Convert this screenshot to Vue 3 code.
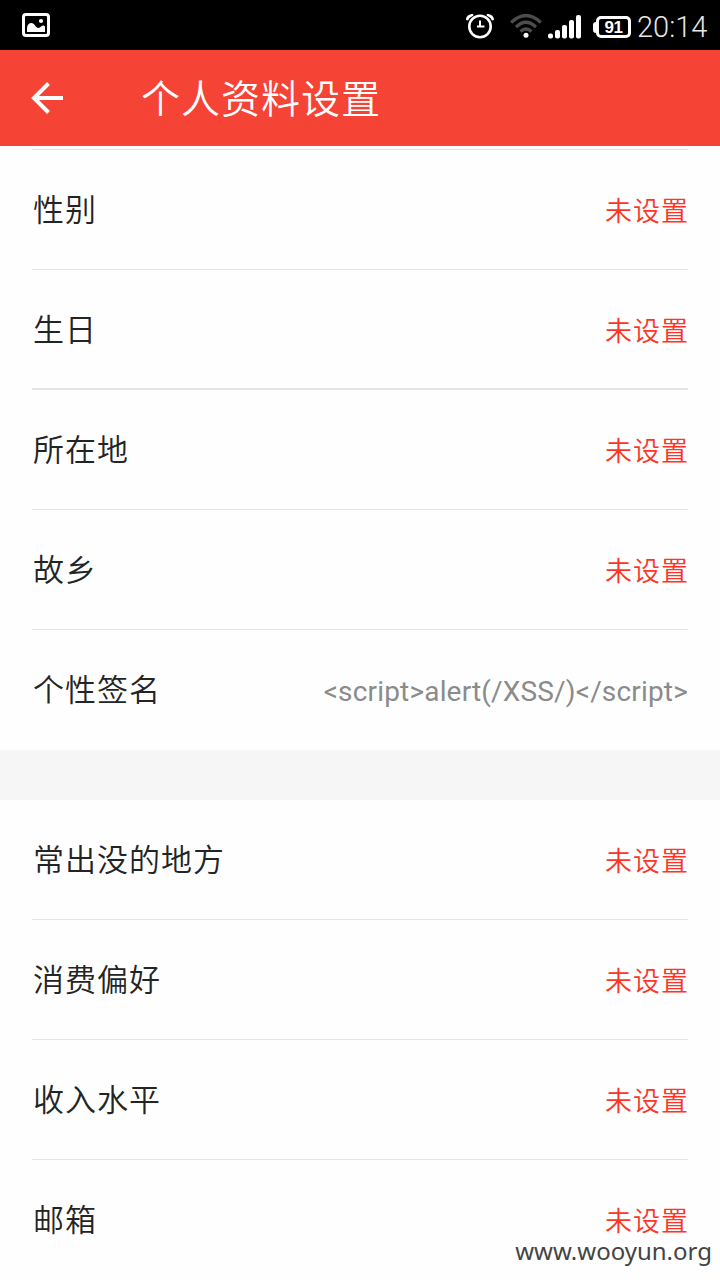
<script setup>
import { ref } from "vue";

const groups = ref([
  [
    { label: "性别" },
    { label: "生日", thick: true },
    { label: "所在地" },
    { label: "故乡" },
    { label: "个性签名", value: "<script>alert(/XSS/)<\/script>" },
  ],
  [
    { label: "常出没的地方" },
    { label: "消费偏好" },
    { label: "收入水平" },
    { label: "邮箱" },
  ],
]);
</script>

<template>
  <div class="screen">
    <div class="status-bar">
      <svg class="status-bar__picture" width="28" height="24" viewBox="0 0 28 24">
        <rect x="1.5" y="1.5" width="25" height="21" rx="2.5" fill="none" stroke="#fff" stroke-width="3" />
        <circle cx="19" cy="8" r="2.1" fill="#fff" />
        <path d="M5 19v-4c0-3 2-5 4.300-5 3.400 0 4.200 5 7.200 5 2 0 2.500-2.500 4.500-2.500 1 0 2 .5 2 1.500v5z" fill="#fff" />
      </svg>
      <div class="status-bar__right">
        <svg class="status-bar__alarm" width="30" height="26" viewBox="0 0 30 26">
          <circle cx="15" cy="13.500" r="10.700" fill="none" stroke="#fff" stroke-width="2.600" />
          <path d="M15 7.500v7M12 13.500h7.500" fill="none" stroke="#fff" stroke-width="2" />
          <path d="M1 7C1 3.500 3.500 1 8 1L8.500 2.500Q5 4 3 7.500ZM29 7C29 3.500 26.500 1 22 1L21.500 2.500Q25 4 27 7.500Z" fill="#fff" />
        </svg>
        <svg class="status-bar__wifi" width="32" height="26" viewBox="0 0 32 26">
          <g fill="none" stroke="#4d4d4d" stroke-width="3.200">
            <path d="M1.200 9.500Q16-4.500 30.800 9.500" />
            <path d="M6 14Q16 4.500 26 14" />
            <path d="M10.500 18.500Q16 13.500 21.500 18.500" />
          </g>
          <circle cx="16" cy="22.300" r="2.500" fill="#fff" />
        </svg>
        <svg class="status-bar__signal" width="34" height="24" viewBox="0 0 34 24" fill="#fff">
          <rect x="0" y="18.500" width="5" height="5" rx="2" />
          <rect x="7" y="15" width="5" height="8.500" rx="2" />
          <rect x="14" y="10" width="5" height="13.500" rx="2" />
          <rect x="21" y="5" width="5" height="18.500" rx="2" />
          <rect x="28" y="0" width="5" height="23.500" rx="2" />
        </svg>
        <div class="battery">
          <i class="battery__cap"></i>
          <span class="battery__body">91</span>
        </div>
        <span class="status-bar__time">20:14</span>
      </div>
    </div>

    <header class="header">
      <svg class="header__back" width="34" height="32" viewBox="0 0 34 32">
        <path d="M18.500 1.500 4 16l14.500 14.500M3 16h30" fill="none" stroke="#fff" stroke-width="4" />
      </svg>
      <h1 class="header__title">个人资料设置</h1>
    </header>

    <main class="settings">
      <ul v-for="(group, index) in groups" :key="index" class="settings__group">
        <li
          v-for="item in group"
          :key="item.label"
          class="row"
          :class="{ 'row--thick': item.thick }"
        >
          <span class="row__label">{{ item.label }}</span>
          <span v-if="item.value" class="row__value row__value--filled">{{ item.value }}</span>
          <span v-else class="row__value">未设置</span>
        </li>
      </ul>
    </main>

    <span class="watermark">www.wooyun.org</span>
  </div>
</template>

<style>
body {
  margin: 0;
  background: #fff;
}
</style>

<style scoped>
.screen {
  position: relative;
  width: 720px;
  height: 1280px;
  overflow: hidden;
  background: #fefefe;
  font-family: Roboto, "Noto Sans CJK SC", sans-serif;
}

.status-bar {
  display: flex;
  justify-content: space-between;
  box-sizing: border-box;
  height: 50px;
  padding: 0 12px 0 22px;
  background: #000;
}

.status-bar__picture {
  margin-top: 13px;
}

.status-bar__right {
  display: flex;
  align-items: flex-start;
}

.status-bar__alarm {
  margin-top: 13px;
}

.status-bar__wifi {
  margin: 13px 0 0 15px;
}

.status-bar__signal {
  margin: 15px 0 0 6px;
}

.battery {
  display: flex;
  align-items: center;
  margin: 16px 0 0 11px;
}

.battery__cap {
  width: 4px;
  height: 11px;
  margin-right: -1px;
  border-radius: 3px 0 0 3px;
  background: #fff;
}

.battery__body {
  box-sizing: border-box;
  width: 35px;
  height: 22px;
  border: 3px solid #fff;
  border-radius: 5px;
  color: #fff;
  font: bold 17px/17px "Liberation Sans", sans-serif;
  letter-spacing: -0.5px;
  text-align: center;
}

.status-bar__time {
  width: 71px;
  margin-left: 6px;
  color: #e6e6e6;
  font-size: 29px;
  font-weight: 300;
  line-height: 54px;
  white-space: nowrap;
}

.header {
  display: flex;
  align-items: center;
  height: 96px;
  padding-left: 30px;
  background: #f54336;
}

.header__title {
  margin: 0 0 0 77px;
  padding-bottom: 3px;
  color: #fff;
  font-family: "Noto Sans CJK SC", sans-serif;
  font-size: 39px;
  font-weight: 350;
  line-height: 93px;
  letter-spacing: 1px;
}

.settings {
  padding-top: 3px;
}

.settings::before {
  content: "";
  display: block;
  height: 1px;
  margin: 0 32px;
  background: #e4e4e4;
}

.settings__group {
  margin: 0;
  padding: 0 32px;
  list-style: none;
}

.settings__group + .settings__group {
  border-top: 50px solid #f6f6f6;
}

.row {
  display: flex;
  justify-content: space-between;
  align-items: center;
  box-sizing: border-box;
  height: 120px;
  border-bottom: 1px solid #e4e4e4;
}

.row--thick {
  border-bottom-width: 2px;
}

.row:last-child {
  border-bottom-color: transparent;
}

.row__label {
  padding: 3px 0 0 1px;
  color: #242424;
  font-size: 31px;
  font-weight: 350;
  line-height: 32px;
  letter-spacing: 1px;
}

.row__value {
  margin-right: -1px;
  padding-top: 4px;
  color: #ff3429;
  font-size: 27px;
  font-weight: 350;
  line-height: 28px;
  letter-spacing: 1px;
}

.row--thick .row__label,
.row--thick .row__value {
  margin-top: 1px;
}

.row__value--filled {
  margin-right: 0;
  color: #8b8b8b;
  font-size: 28px;
  font-weight: 400;
  letter-spacing: 0.17px;
}

.watermark {
  position: absolute;
  right: 8px;
  bottom: 15px;
  color: #444;
  font: 24px/28px "Noto Sans", sans-serif;
}
</style>
